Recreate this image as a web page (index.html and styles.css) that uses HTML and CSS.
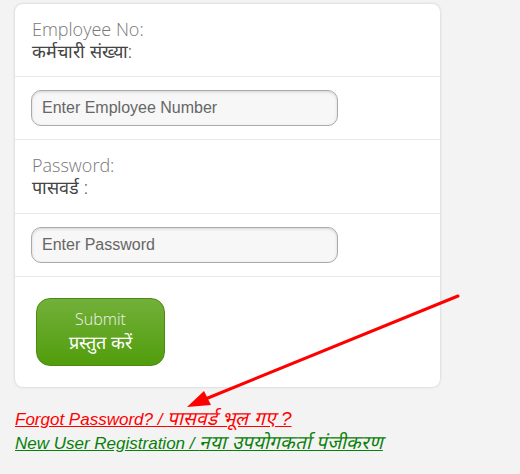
FILE: index.html
```html
<!DOCTYPE html>
<html lang="en">
<head>
  <meta charset="UTF-8" />
  <meta name="viewport" content="width=device-width, initial-scale=1" />
  <title>Employee Login</title>
  <link rel="stylesheet" href="styles.css">
</head>
<body>

  <!-- Login card -->
  <form class="login-box" onsubmit="return false;">
    <div class="row">
      <label for="empNo" class="field-label">
        <span class="en">Employee No:</span>
        <span class="hi">कर्मचारी संख्या:</span>
      </label>
    </div>
    <div class="row row-input">
      <input type="text" id="empNo" placeholder="Enter Employee Number" autocomplete="off" />
    </div>
    <div class="row row-pass">
      <label for="empPass" class="field-label">
        <span class="en">Password:</span>
        <span class="hi">पासवर्ड :</span>
      </label>
    </div>
    <div class="row row-input">
      <input type="password" id="empPass" placeholder="Enter Password" />
    </div>
    <div class="row row-submit">
      <button type="submit" class="submit-btn">
        <span class="en">Submit</span>
        <span class="hi">प्रस्तुत करें</span>
      </button>
    </div>
  </form>

  <!-- Links under the card -->
  <div class="extra-links">
    <a href="#" class="forgot">Forgot Password? / <span class="hi">पासवर्ड भूल गए ?</span></a>
    <a href="#" class="register">New User Registration / <span class="hi">नया उपयोगकर्ता पंजीकरण</span></a>
  </div>

  <!-- annotation arrow drawn over the page -->
  <svg class="arrow" width="520" height="474" viewBox="0 0 520 474" aria-hidden="true">
    <line x1="458" y1="296" x2="203" y2="400" stroke="#f00" stroke-width="3" stroke-linecap="round" />
    <polygon points="187,407 204,391 211,405" fill="#f00" />
  </svg>

</body>
</html>
```

FILE: styles.css
```css
/* Base */
body {
  margin: 0;
  padding: 4px 0 0 15px;
  background: #f3f3f3;
  font-family: 'Open Sans', 'Liberation Sans', sans-serif;
  min-height: 100vh;
  box-sizing: border-box;
}

/* Card */
.login-box {
  width: 425px;
  background: #fff;
  border-radius: 8px;
  box-shadow: 0 0 3px rgba(0, 0, 0, 0.18);
  overflow: hidden;
}

.row {
  padding: 13px 17px;
  border-top: 1px solid #e9e9e9;
}
.row:first-child {
  border-top: none;
}
.row-pass {
  padding-bottom: 14px;
}

.field-label {
  display: flex;
  flex-direction: column;
  font-size: 18px;
  line-height: 22px;
  font-weight: 300;
  color: #777;
  padding-top: 1px;
  padding-bottom: 1px;
}
.field-label .hi {
  color: #444;
  font-weight: 300;
}

.row-input {
  padding: 13px 16px;
}

input[type="text"],
input[type="password"] {
  width: 307px;
  height: 36px;
  box-sizing: border-box;
  padding: 0 10px;
  font-family: 'Liberation Sans', Arial, sans-serif;
  font-size: 16px;
  color: #333;
  background: #f7f7f7;
  border: 1px solid #aaa;
  border-radius: 10px;
  box-shadow: inset 0 1px 3px rgba(0, 0, 0, 0.15);
}
input::placeholder {
  color: #666;
}
input:focus {
  outline: none;
  border-color: #888;
}

.row-submit {
  padding: 21px 21px 21px 21px;
}

.submit-btn {
  width: 129px;
  height: 68px;
  display: flex;
  flex-direction: column;
  align-items: center;
  justify-content: center;
  background: linear-gradient(#72b03a, #519d0c);
  border: 1px solid #4c8a14;
  border-radius: 14px;
  color: #fff;
  font-family: 'Open Sans', 'Liberation Sans', sans-serif;
  cursor: pointer;
  padding: 0 0 2px 0;
}
.submit-btn .en {
  font-size: 16px;
  font-weight: 300;
  line-height: 22px;
  color: #f2f2f2;
}
.submit-btn .hi {
  font-size: 18px;
  font-weight: 300;
  line-height: 24px;
}

/* Links */
.extra-links {
  display: flex;
  flex-direction: column;
  align-items: flex-start;
  margin-top: 21px;
  font-family: 'Liberation Sans', Arial, sans-serif;
  font-style: italic;
  font-size: 17px;
  line-height: 24px;
}
.extra-links a {
  text-decoration: underline;
}
.extra-links .hi {
  font-size: 19px;
  font-weight: 300;
  line-height: 20px;
}
.forgot {
  color: #f00;
}
.register {
  color: #0a800a;
}

/* Annotation overlay */
.arrow {
  position: absolute;
  top: 0;
  left: 0;
  pointer-events: none;
}
```
